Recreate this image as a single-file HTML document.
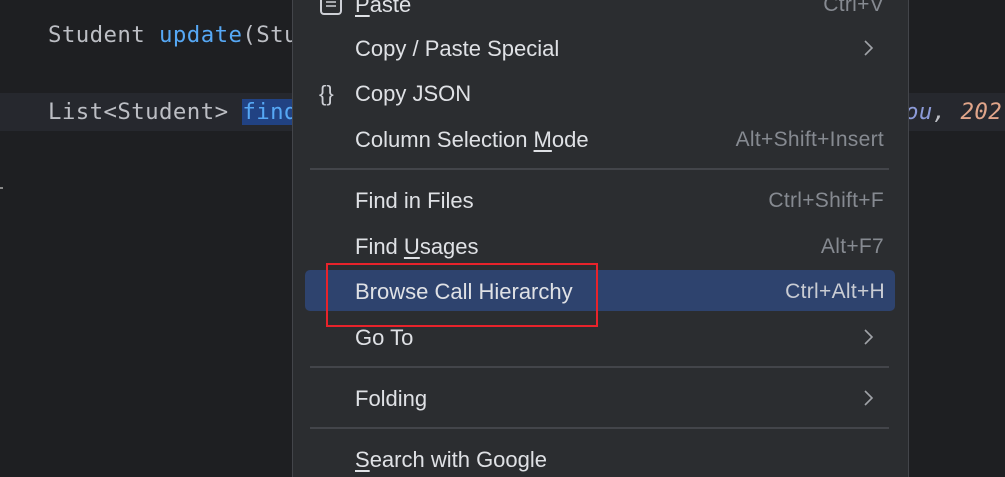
<!DOCTYPE html>
<html><head><style>
html,body{margin:0;width:1005px;height:477px;overflow:hidden}
body{background:#1e1f22;position:relative;font-family:"Liberation Sans",sans-serif}
.code{position:absolute;font-family:"DejaVu Sans Mono","Liberation Mono",monospace;font-size:22.4px;letter-spacing:0.4px;color:#bcbec4;white-space:pre}
.cl{position:absolute;left:0;top:93px;width:1005px;height:38px;background:#26282e}
.menu{position:absolute;left:292px;top:0;width:615px;height:477px;background:#2b2d30;border-left:1px solid #43454a;border-right:1px solid #43454a}
.t{position:absolute;left:355px;font-size:22px;color:#dfe1e5;white-space:pre}
.s{position:absolute;right:121px;font-size:21px;letter-spacing:0.3px;color:#868a91;white-space:pre}
.sep{position:absolute;left:310px;width:579px;height:2px;background:#43454a}
.ar{position:absolute;left:862px}
u{text-decoration:underline;text-underline-offset:3px}
</style></head><body>
<div class="cl"></div>
<div class="code" style="left:48px;top:22px">Student <span style="color:#56a8f5">update</span>(Stu</div>
<div class="code" style="left:48px;top:99px">List&lt;Student&gt; <span style="color:#56a8f5;background:#214283">find</span></div>
<div class="code" style="left:905px;top:99px;font-style:italic"><span style="color:#8c9ad8">ou</span>, <span style="color:#e0a58a">202</span></div>
<div style="position:absolute;left:0;top:187px;width:3px;height:2px;background:#888"></div>
<div class="menu"></div>
<div style="position:absolute;left:305px;top:270px;width:590px;height:41px;background:#2e436e;border-radius:5px"></div>
<div class="sep" style="top:168px"></div>
<div class="sep" style="top:366px"></div>
<div class="sep" style="top:427px"></div>
<svg style="position:absolute;left:320px;top:-4px" width="22" height="20"><rect x="1" y="1" width="20" height="17" rx="3" fill="none" stroke="#ced0d6" stroke-width="2"/><path d="M6 6h10M6 10h10" stroke="#ced0d6" stroke-width="1.6"/></svg>
<div class="t" style="top:-8px"><u>P</u>aste</div><div class="s" style="top:-7px">Ctrl+V</div>
<div class="t" style="top:36px">Copy / Paste Special</div>
<svg class="ar" style="top:38px" width="14" height="20"><path d="M3 3l7 7-7 7" fill="none" stroke="#a0a3a8" stroke-width="1.6"/></svg>
<div style="position:absolute;left:319px;top:81px;font-size:22px;color:#ced0d6">{}</div>
<div class="t" style="top:81px">Copy JSON</div>
<div class="t" style="top:127px">Column Selection <u>M</u>ode</div><div class="s" style="top:128px">Alt+Shift+Insert</div>
<div class="t" style="top:188px">Find in Files</div><div class="s" style="top:189px">Ctrl+Shift+F</div>
<div class="t" style="top:234px">Find <u>U</u>sages</div><div class="s" style="top:235px">Alt+F7</div>
<div class="t" style="top:279px">Browse Call Hierarchy</div><div class="s" style="top:280px;color:#c9ccd3;right:120px">Ctrl+Alt+H</div>
<div class="t" style="top:325px">Go To</div>
<svg class="ar" style="top:327px" width="14" height="20"><path d="M3 3l7 7-7 7" fill="none" stroke="#a0a3a8" stroke-width="1.6"/></svg>
<div class="t" style="top:386px">Folding</div>
<svg class="ar" style="top:388px" width="14" height="20"><path d="M3 3l7 7-7 7" fill="none" stroke="#a0a3a8" stroke-width="1.6"/></svg>
<div class="t" style="top:447px"><u>S</u>earch with Google</div>
<div style="position:absolute;left:326px;top:263px;width:268px;height:60px;border:2px solid #e8232b"></div>
</body></html>
